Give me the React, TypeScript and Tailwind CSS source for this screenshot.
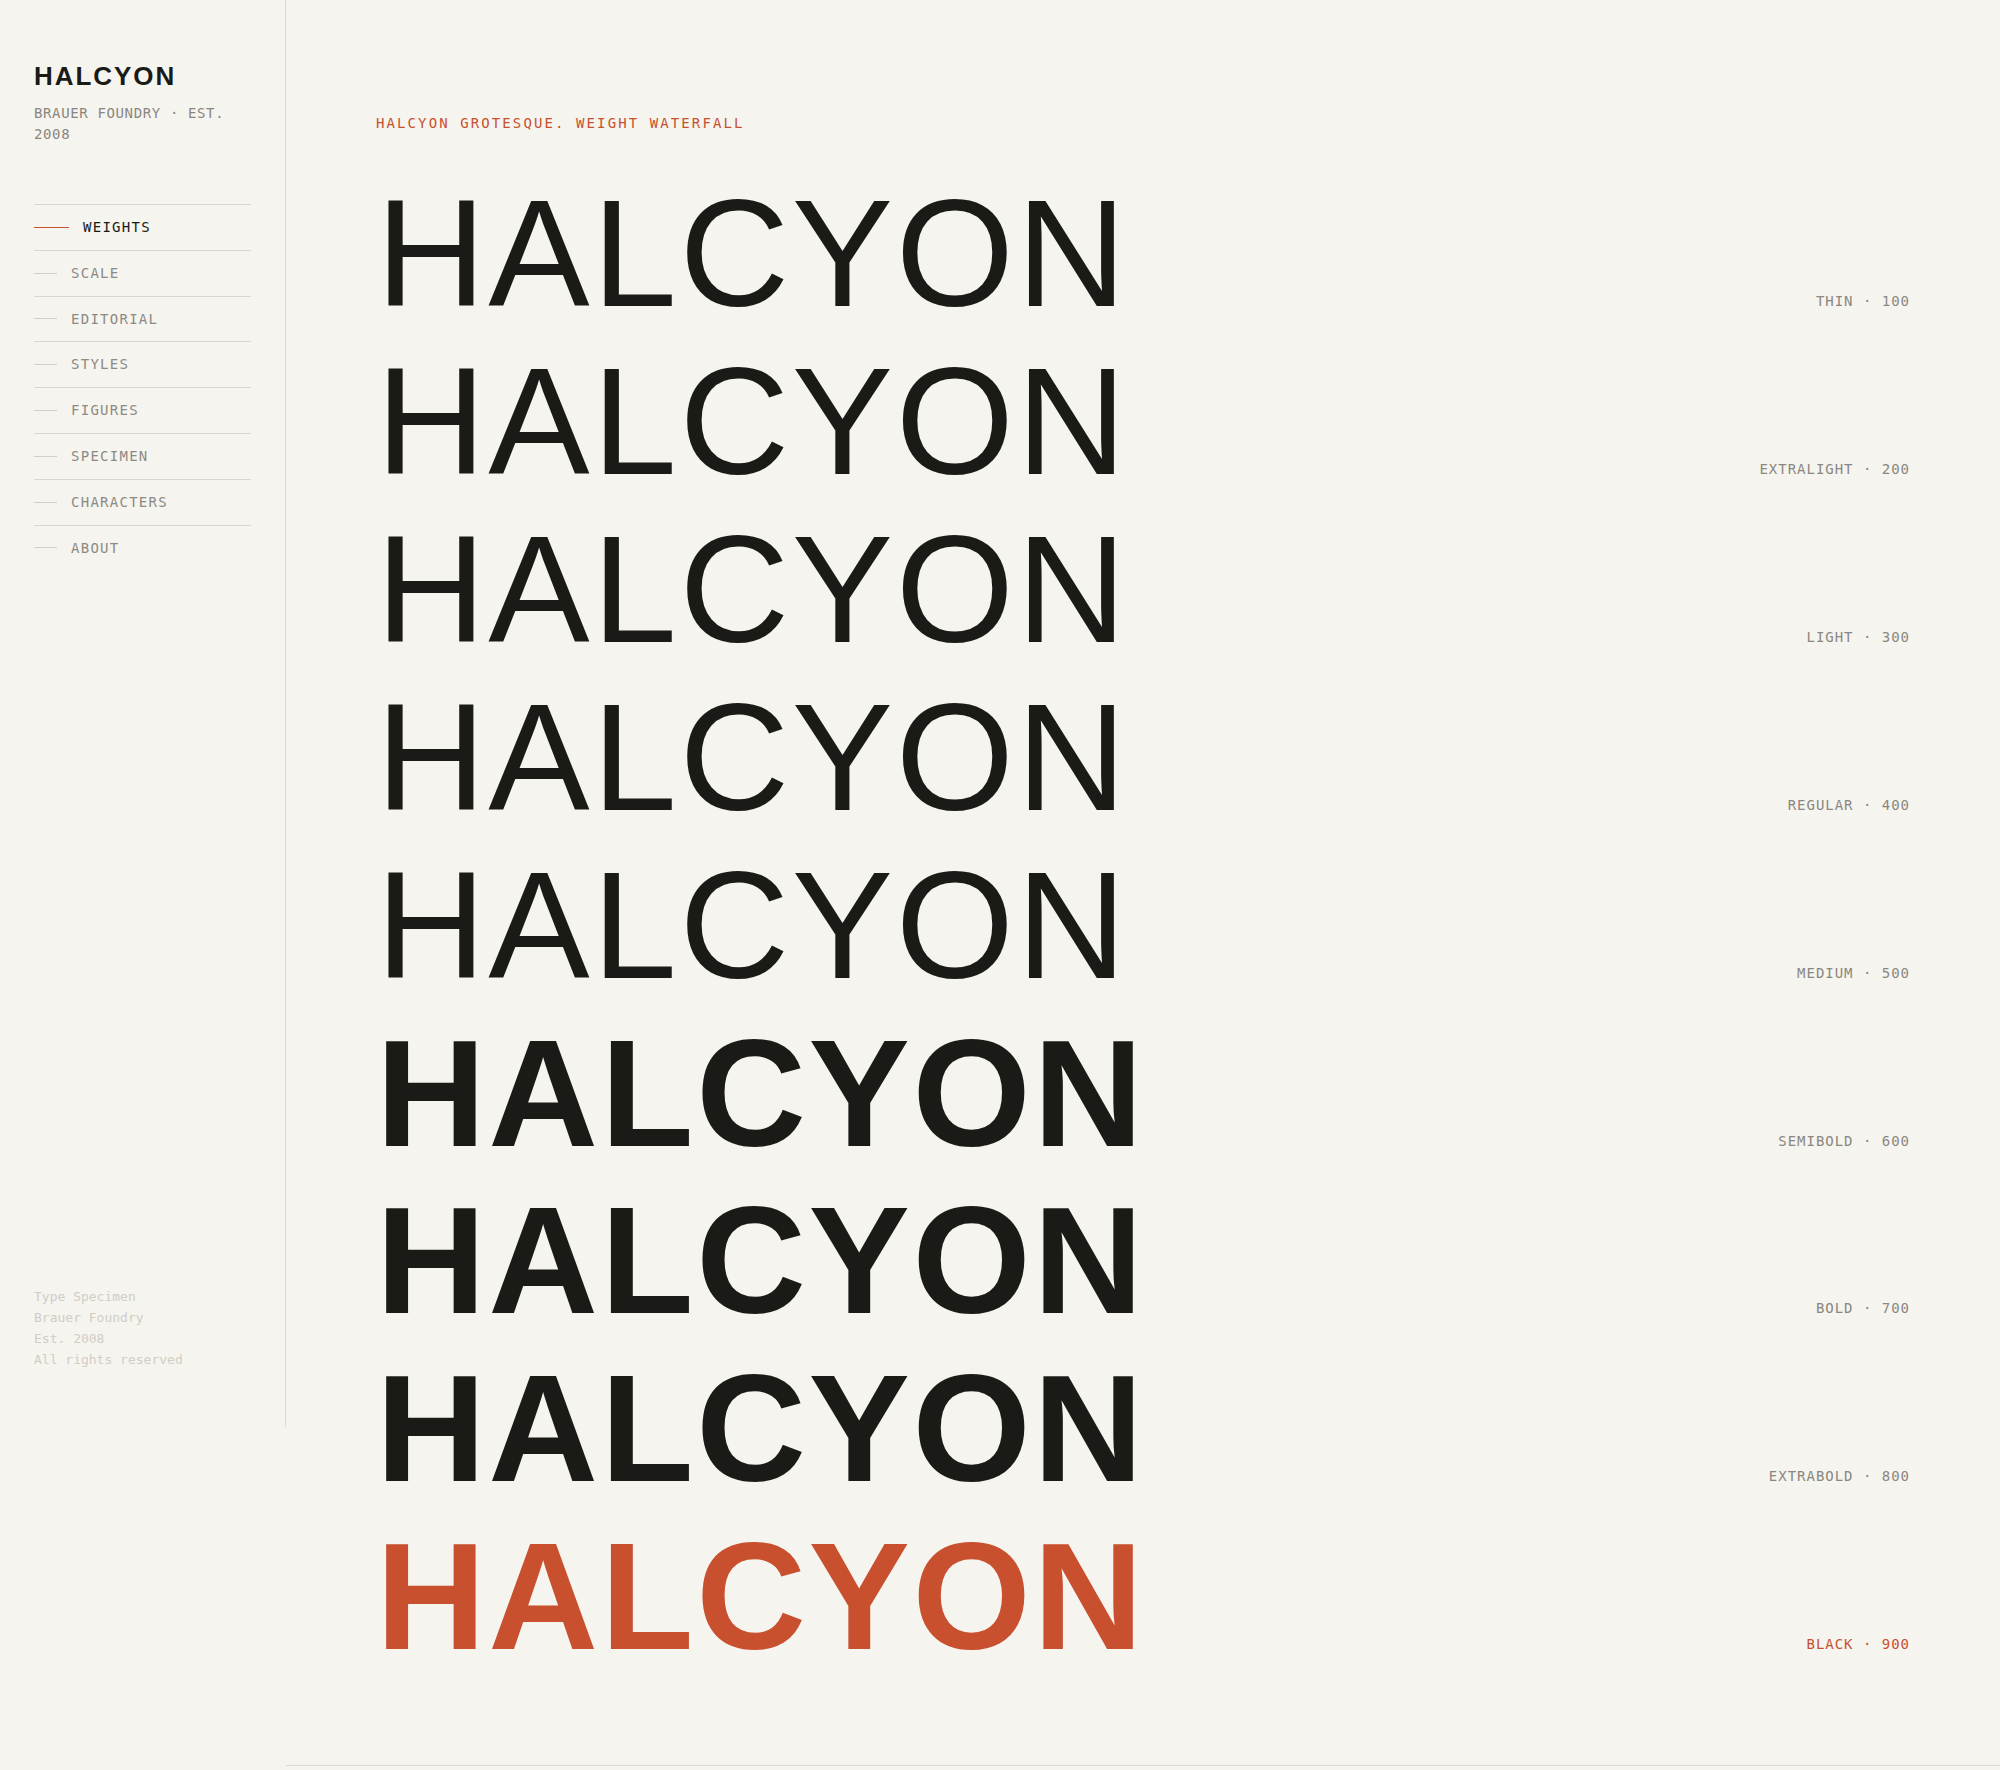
const nav = ['Weights', 'Scale', 'Editorial', 'Styles', 'Figures', 'Specimen', 'Characters', 'About'];

const weights = [
  { name: 'Thin', value: 100, cls: 'font-thin' },
  { name: 'ExtraLight', value: 200, cls: 'font-extralight' },
  { name: 'Light', value: 300, cls: 'font-light' },
  { name: 'Regular', value: 400, cls: 'font-normal' },
  { name: 'Medium', value: 500, cls: 'font-medium' },
  { name: 'SemiBold', value: 600, cls: 'font-semibold' },
  { name: 'Bold', value: 700, cls: 'font-bold' },
  { name: 'ExtraBold', value: 800, cls: 'font-extrabold' },
  { name: 'Black', value: 900, cls: 'font-black' },
];

const mono = "font-['DejaVu_Sans_Mono',monospace]";

const Sidebar = () => (
  <aside className="flex h-[1427px] w-[286px] shrink-0 flex-col border-r border-[#dcd9d2] px-[34px] pb-[57px] pt-[60px]">
    <div className="font-['Liberation_Sans',Arial,sans-serif] text-[26px] font-bold leading-[32px] tracking-[0.075em] text-[#1a1a17]">
      HALCYON
    </div>
    <p className={`${mono} mt-[11px] text-[14px] uppercase leading-[21px] tracking-[0.045em] text-[#8a8780]`}>
      Brauer Foundry · Est. 2008
    </p>

    <nav className="mt-[59px]">
      {nav.map((item, i) => {
        const active = i === 0;
        return (
          <a
            key={item}
            href={`#${item.toLowerCase()}`}
            className="flex items-center gap-[14px] border-t border-[#d9d6cf] py-3"
          >
            <span className={active ? 'h-px w-[35px] bg-[#c8502e]' : 'h-px w-[23px] bg-[#d2cfc8]'} />
            <span
              className={`${mono} text-[14px] uppercase leading-[20.8px] tracking-[0.09em] ${
                active ? 'text-[#1a1a17]' : 'text-[#8c8a84]'
              }`}
            >
              {item}
            </span>
          </a>
        );
      })}
    </nav>

    {/* Footer */}
    <div className={`${mono} mt-auto text-[13px] leading-[21px] text-[#d0cdc5]`}>
      <div>Type Specimen</div>
      <div>Brauer Foundry</div>
      <div>Est. 2008</div>
      <div>All rights reserved</div>
    </div>
  </aside>
);

export default function App() {
  return (
    <div className="flex min-h-[1770px] w-full items-start bg-[#f6f4ef]">
      <Sidebar />
      <main className="min-w-0 flex-1 border-b border-[#dcd9d2] pb-[84px] pl-[90px] pr-[90px] pt-[113px]">
        <p className={`${mono} text-[14px] uppercase leading-[21px] tracking-[0.15em] text-[#c8502e]`}>
          Halcyon Grotesque. Weight Waterfall
        </p>

        <div className="mt-[36px]">
          {weights.map((w) => {
            const accent = w.value === 900;
            return (
              <div key={w.value} className="flex items-baseline justify-between">
                <span
                  className={`font-['Liberation_Sans',Arial,sans-serif] text-[152px] leading-[167.9px] tracking-[0.017em] ${w.cls} ${
                    accent ? 'text-[#c8502e]' : 'text-[#1a1a17]'
                  }`}
                >
                  HALCYON
                </span>
                <span
                  className={`${mono} text-[14px] uppercase tracking-[0.07em] ${
                    accent ? 'text-[#c8502e]' : 'text-[#8a8780]'
                  }`}
                >
                  {w.name} · {w.value}
                </span>
              </div>
            );
          })}
        </div>
      </main>
    </div>
  );
}
